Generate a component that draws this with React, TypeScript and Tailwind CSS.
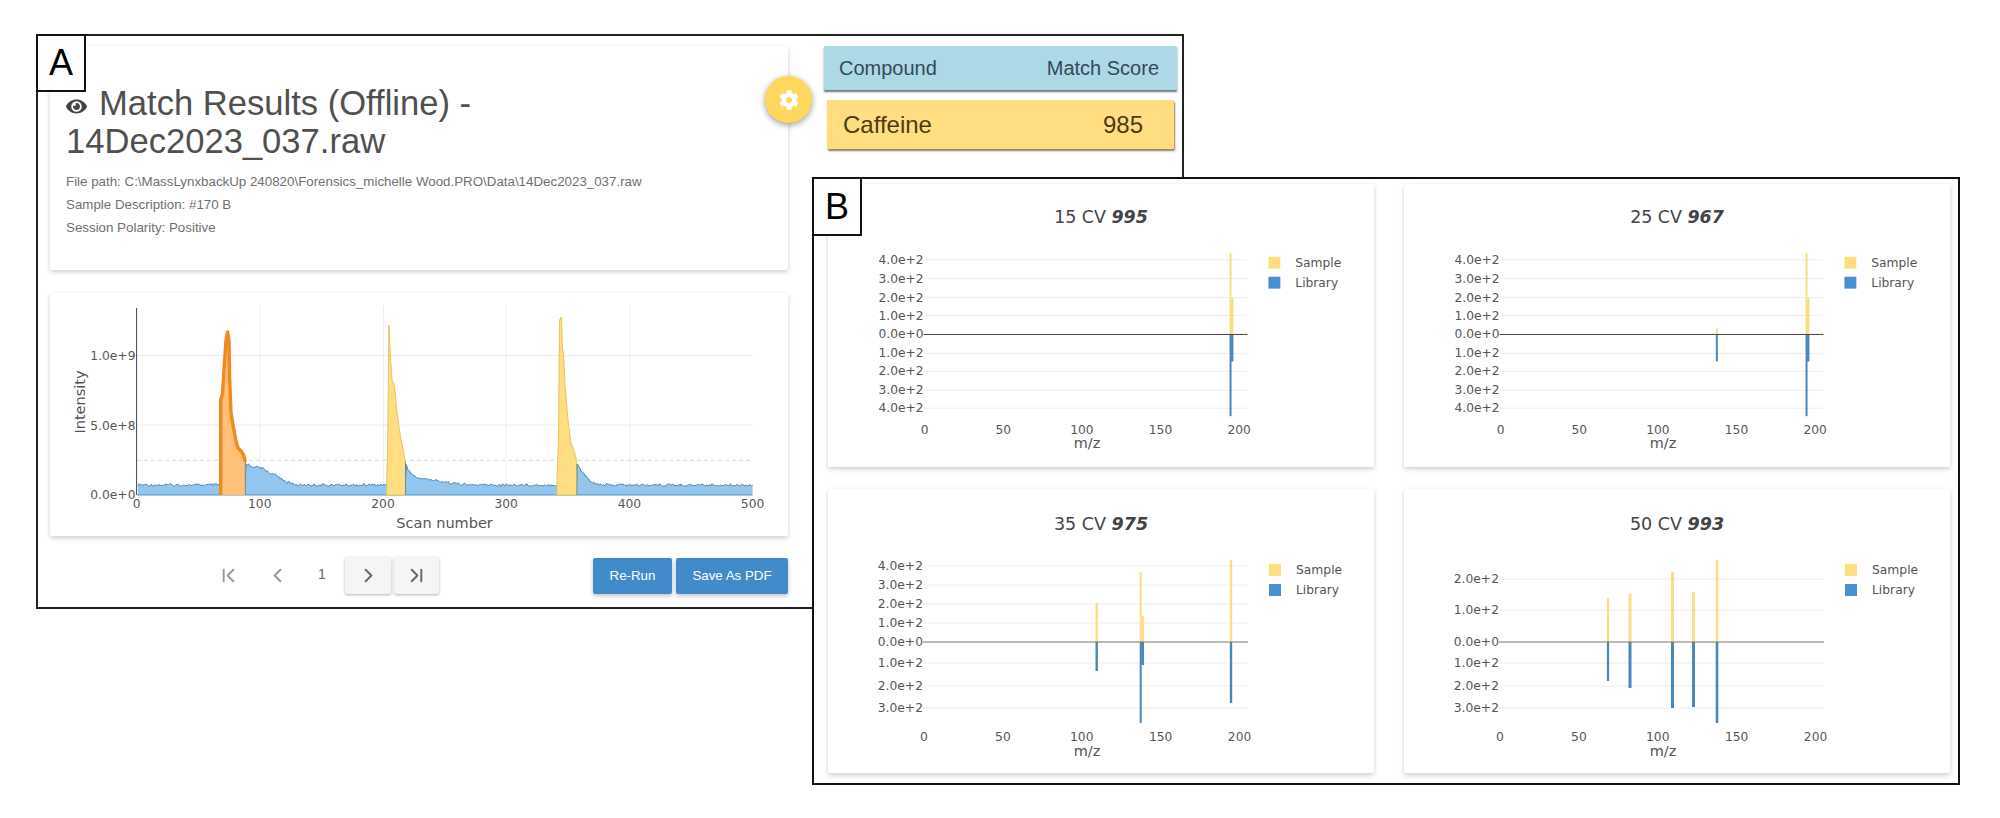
import React from "react";
import { FaEye, FaCog } from "react-icons/fa";
import { ChevronFirst, ChevronLast, ChevronLeft, ChevronRight } from "lucide-react";

const chartFont = "font-['DejaVu_Sans',sans-serif]";

type Peak = { x: number; up: number; down: number; w?: number };
type Tick = { label: string; y: number };

function Spectrum({
  cv,
  score,
  ticks,
  zero,
  xLabelY,
  mzY,
  titleY,
  legendY,
  peaks,
  zeroColor,
}: {
  cv: string;
  score: string;
  ticks: Tick[];
  zero: number;
  xLabelY: number;
  mzY: number;
  titleY: number;
  legendY: number;
  peaks: Peak[];
  zeroColor: string;
}) {
  return (
    <div className="bg-white rounded-[2px] shadow-[0_2px_5px_rgba(0,0,0,0.2)]">
      <svg viewBox="0 0 546 284" className={"block w-full h-full " + chartFont}>
        <text x="273" y={titleY} textAnchor="middle" dominantBaseline="central" className="fill-[#444] text-[17.5px]">
          {cv} CV <tspan className="font-bold italic">{score}</tspan>
        </text>
        {ticks.map((t) => (
          <g key={t.label + t.y}>
            {t.y !== zero && <line x1="95" x2="420" y1={t.y} y2={t.y} stroke="#eeeeee" strokeWidth="1" />}
            <text x="95" y={t.y} textAnchor="end" dominantBaseline="central" className="fill-[#555] text-[12.3px]">
              {t.label}
            </text>
          </g>
        ))}
        {[0, 50, 100, 150, 200].map((v, i) => (
          <text key={v} x={96 + i * 78.9} y={xLabelY} textAnchor="middle" dominantBaseline="central" className="fill-[#555] text-[12.3px]">
            {v}
          </text>
        ))}
        <text x="259" y={mzY} textAnchor="middle" dominantBaseline="central" className="fill-[#555] text-[14.5px]">
          m/z
        </text>
        {peaks.map((p, i) => (
          <g key={i}>
            <rect x={p.x - (p.w ?? 2.4) / 2} y={p.up} width={p.w ?? 2.4} height={zero - p.up} fill="#fadd85" />
            <rect x={p.x - (p.w ?? 2.4) / 2} y={zero} width={p.w ?? 2.4} height={p.down - zero} fill="#4a88bc" />
          </g>
        ))}
        <line x1="95" x2="420" y1={zero} y2={zero} stroke={zeroColor} strokeWidth="1" />
        <rect x="441" y={legendY} width="12" height="12" fill="#ffdd80" />
        <rect x="441" y={legendY + 20} width="12" height="12" fill="#4a8fd0" />
        <text x="468" y={legendY + 6} dominantBaseline="central" className="fill-[#555] text-[12.3px]">
          Sample
        </text>
        <text x="468" y={legendY + 26} dominantBaseline="central" className="fill-[#555] text-[12.3px]">
          Library
        </text>
      </svg>
    </div>
  );
}

const scanX = (s: number) => 136.6 + s * 1.232;

const decays: [number, number][][] = [
  [[245.3, 462], [250, 466], [262, 468], [270, 473], [281, 478], [286, 482], [295, 484.5]],
  [[405.5, 462], [408, 470], [415, 477], [425, 479], [439, 481], [455, 483.5], [470, 485]],
  [[577, 464], [582, 472], [589, 480], [597, 484], [605, 485]],
];

function baseY(x: number) {
  for (const seg of decays) {
    for (let i = 0; i < seg.length - 1; i++) {
      if (x >= seg[i][0] && x < seg[i + 1][0]) {
        const t = (x - seg[i][0]) / (seg[i + 1][0] - seg[i][0]);
        return seg[i][1] + t * (seg[i + 1][1] - seg[i][1]);
      }
    }
  }
  return 485;
}

function blueLine() {
  const pts: string[] = [];
  for (let s = 1; s <= 500; s++) {
    const x = scanX(s);
    const n = Math.sin(s * 12.9898) * 43758.5453;
    const r = n - Math.floor(n);
    pts.push(x.toFixed(1) + "," + (baseY(x) + (r - 0.5) * 2.6).toFixed(1));
  }
  return pts;
}

const orangeTop = "220.7,495 220.7,400 222.5,394 224,370 226,340 227.6,332 229,340 229.5,375 231,413 233,425 236,441 238,448 241,451 243.7,455 245.3,462";
const yellowA = "386.7,495 386.7,478 387.6,450 388.9,325 390,350 392,380 394,384 395,390 397,412 399,427 402,445 405.5,462 405.5,495";
const yellowB = "557,495 557,478 558.5,440 559.5,320 561.5,317 562.5,350 563.5,352 565,385 568,420 571,443 574,450 576,458 577,464 577,495";

function Chromatogram() {
  const line = blueLine();
  const gridX = [260, 383.5, 506, 630];
  return (
    <svg viewBox="50 293 738 243" className={"block w-full h-full " + chartFont}>
      {gridX.map((x) => (
        <line key={x} x1={x} x2={x} y1="306" y2="495" stroke="#efefef" strokeWidth="1" />
      ))}
      {[355.7, 425].map((y) => (
        <line key={y} x1="137" x2="752.5" y1={y} y2={y} stroke="#ececec" strokeWidth="1" />
      ))}
      <polygon points={"138,495 " + line.join(" ") + " 752.5,495"} fill="#93c6ee" />
      <polyline points={line.join(" ")} fill="none" stroke="#4a86b0" strokeWidth="1" />
      <line x1="137" x2="752.5" y1="495" y2="495" stroke="#5f93b8" strokeWidth="1" />
      <line x1="137" x2="752.5" y1="460.3" y2="460.3" stroke="#d8d8d8" strokeWidth="1" strokeDasharray="4 3" />
      <polygon points={orangeTop + " 245.3,495"} fill="#ffc078" />
      <polyline points={orangeTop} fill="none" stroke="#f0891e" strokeWidth="3.4" strokeLinejoin="round" />
      <line x1="245.3" x2="245.3" y1="462" y2="495" stroke="#5f8fae" strokeWidth="1" />
      <polygon points={yellowA} fill="#ffdd80" stroke="#e6c561" strokeWidth="1" />
      <line x1="405.5" x2="405.5" y1="462" y2="495" stroke="#5f8fae" strokeWidth="1" />
      <polygon points={yellowB} fill="#ffdd80" stroke="#e6c561" strokeWidth="1" />
      <line x1="577" x2="577" y1="464" y2="495" stroke="#5f8fae" strokeWidth="1" />
      <line x1="136.6" x2="136.6" y1="308" y2="495" stroke="#444" strokeWidth="1" />
      {[
        ["1.0e+9", 355.7],
        ["5.0e+8", 425.5],
        ["0.0e+0", 495],
      ].map(([t, y]) => (
        <text key={t} x="135.5" y={y} textAnchor="end" dominantBaseline="central" className="fill-[#555] text-[12.3px]">
          {t}
        </text>
      ))}
      {[0, 100, 200, 300, 400, 500].map((v, i) => (
        <text key={v} x={136.6 + i * 123.2} y="503.5" textAnchor="middle" dominantBaseline="central" className="fill-[#555] text-[12.3px]">
          {v}
        </text>
      ))}
      <text x="444.6" y="523" textAnchor="middle" dominantBaseline="central" className="fill-[#555] text-[14.5px]">
        Scan number
      </text>
      <text
        transform="translate(80 402) rotate(-90)"
        textAnchor="middle"
        dominantBaseline="central"
        className="fill-[#555] text-[14.5px]"
      >
        Intensity
      </text>
    </svg>
  );
}

const topTicks = (offs: number[], labels: string[]) => labels.map((label, i) => ({ label, y: offs[i] }));
const rowOneLabels = ["4.0e+2", "3.0e+2", "2.0e+2", "1.0e+2", "0.0e+0", "1.0e+2", "2.0e+2", "3.0e+2", "4.0e+2"];
const rowOneY = [76, 95, 114, 132, 151, 170, 188, 207, 225];
const b3Labels = ["4.0e+2", "3.0e+2", "2.0e+2", "1.0e+2", "0.0e+0", "1.0e+2", "2.0e+2", "3.0e+2"];
const b3Y = [77, 96, 115, 134, 153, 174, 197, 219];
const b4Labels = ["2.0e+2", "1.0e+2", "0.0e+0", "1.0e+2", "2.0e+2", "3.0e+2"];
const b4Y = [90, 121, 153, 174, 197, 219];

function Label({ text, className }: { text: string; className: string }) {
  return (
    <div
      className={
        "absolute z-10 flex items-center justify-center bg-white border-2 border-[#111] text-[36px] text-black " +
        className
      }
    >
      {text}
    </div>
  );
}

export default function App() {
  return (
    <div className="relative w-[2000px] h-[818px] overflow-hidden bg-white pl-[36px] pt-[34px] font-['Liberation_Sans',sans-serif]">
      <div className="relative flex w-[1148px] h-[575px] border-2 border-[#222] pl-[12px] pt-[10px] gap-[36px]">
        <Label text="A" className="-left-[2px] -top-[2px] w-[50px] h-[58px]" />
        <div className="flex flex-col w-[738px] shrink-0">
          <div className="relative h-[224px] bg-white rounded-[2px] shadow-[0_2px_5px_rgba(0,0,0,0.2)] pl-[16px] pt-[38px]">
            <h1 className="text-[34.6px] leading-[38px] font-normal text-[#505050]">
              <FaEye className="inline-block align-[-2px] text-[#444] mr-[12px] text-[21px]" />
              Match Results (Offline) -
              <br />
              14Dec2023_037.raw
            </h1>
            <div className="mt-[10px] text-[13.33px] leading-[23px] text-[#707070]">
              <p>File path: C:\MassLynxbackUp 240820\Forensics_michelle Wood.PRO\Data\14Dec2023_037.raw</p>
              <p>Sample Description: #170 B</p>
              <p>Session Polarity: Positive</p>
            </div>
            <div className="absolute -right-[24px] top-[30px] flex items-center justify-center w-[47px] h-[47px] rounded-full bg-[#fdd85d] shadow-[0_2px_6px_rgba(0,0,0,0.4)]">
              <FaCog className="text-white text-[20px]" />
            </div>
          </div>
          <div className="mt-[23px] h-[243px] bg-white rounded-[2px] shadow-[0_2px_5px_rgba(0,0,0,0.2)]">
            <Chromatogram />
          </div>
          <div className="mt-[21px] flex items-start pl-[155px]">
            <div className="w-[47px] h-[37px] flex items-center justify-center text-[#999]">
              <ChevronFirst size={23} strokeWidth={2} />
            </div>
            <div className="ml-[2px] w-[46px] h-[37px] flex items-center justify-center text-[#999]">
              <ChevronLeft size={23} strokeWidth={2} />
            </div>
            <div className="w-[44px] h-[37px] flex items-center justify-center text-[14px] text-[#666] pb-[2px]">1</div>
            <div className="ml-[1px] w-[46px] h-[37px] flex items-center justify-center rounded-[3px] bg-[#f5f5f5] text-[#666] shadow-[0_1px_3px_rgba(0,0,0,0.3)]">
              <ChevronRight size={23} strokeWidth={2} />
            </div>
            <div className="ml-[3px] w-[45px] h-[37px] flex items-center justify-center rounded-[3px] bg-[#f5f5f5] text-[#666] shadow-[0_1px_3px_rgba(0,0,0,0.3)]">
              <ChevronLast size={23} strokeWidth={2} />
            </div>
            <div className="ml-auto flex gap-[4px]">
              <div className="w-[79px] h-[36px] mt-[1px] flex items-center justify-center rounded-[2px] bg-[#428bca] text-white text-[13.3px] shadow-[0_2px_4px_rgba(0,0,0,0.25)]">
                Re-Run
              </div>
              <div className="w-[112px] h-[36px] mt-[1px] flex items-center justify-center rounded-[2px] bg-[#428bca] text-white text-[13.3px] shadow-[0_2px_4px_rgba(0,0,0,0.25)]">
                Save As PDF
              </div>
            </div>
          </div>
        </div>
        <div className="w-[353px] shrink-0">
          <div className="flex items-center justify-between h-[44px] px-[15px] pr-[18px] bg-[#add8e6] rounded-[1px] text-[20px] text-[#34495a] shadow-[0_2px_2px_rgba(40,60,70,0.7)]">
            <span>Compound</span>
            <span>Match Score</span>
          </div>
          <div className="mt-[10px] mx-[3px] flex items-center justify-between h-[49px] pl-[16px] pr-[31px] bg-[#ffdd80] rounded-[1px] text-[24px] text-[#4a3d14] shadow-[1px_2px_2px_rgba(90,75,30,0.7)]">
            <span>Caffeine</span>
            <span>985</span>
          </div>
        </div>
      </div>

      <div className="absolute left-[812px] top-[177px] w-[1148px] h-[608px] border-2 border-[#111] bg-white">
        <Label text="B" className="-left-[2px] -top-[2px] w-[50px] h-[59px]" />
        <div className="grid grid-cols-[546px_546px] grid-rows-[283px_284px] gap-x-[30px] gap-y-[22px] pl-[14px] pt-[5px]">
          <Spectrum
            cv="15"
            score="995"
            ticks={topTicks(rowOneY, rowOneLabels)}
            zero={151}
            xLabelY={247}
            mzY={260}
            titleY={33}
            legendY={73}
            zeroColor="#444"
            peaks={[
              { x: 403, up: 69, down: 233, w: 2 },
              { x: 404.5, up: 114, down: 178, w: 2.8 },
            ]}
          />
          <Spectrum
            cv="25"
            score="967"
            ticks={topTicks(rowOneY, rowOneLabels)}
            zero={151}
            xLabelY={247}
            mzY={260}
            titleY={33}
            legendY={73}
            zeroColor="#444"
            peaks={[
              { x: 313, up: 145, down: 178, w: 2 },
              { x: 403, up: 69, down: 233, w: 2 },
              { x: 404.5, up: 114, down: 178, w: 2.8 },
            ]}
          />
          <Spectrum
            cv="35"
            score="975"
            ticks={topTicks(b3Y, b3Labels)}
            zero={153}
            xLabelY={248}
            mzY={262}
            titleY={35}
            legendY={75}
            zeroColor="#777"
            peaks={[
              { x: 268.7, up: 114, down: 182 },
              { x: 312.7, up: 83, down: 234, w: 2 },
              { x: 314.6, up: 127, down: 176, w: 2.8 },
              { x: 403, up: 71, down: 214 },
            ]}
          />
          <Spectrum
            cv="50"
            score="993"
            ticks={topTicks(b4Y, b4Labels)}
            zero={153}
            xLabelY={248}
            mzY={262}
            titleY={35}
            legendY={75}
            zeroColor="#777"
            peaks={[
              { x: 204, up: 109, down: 192, w: 2.2 },
              { x: 226, up: 105, down: 199, w: 3 },
              { x: 268.5, up: 83, down: 219, w: 3 },
              { x: 289.5, up: 103, down: 218, w: 3 },
              { x: 313, up: 71, down: 234, w: 2.6 },
            ]}
          />
        </div>
      </div>
    </div>
  );
}
